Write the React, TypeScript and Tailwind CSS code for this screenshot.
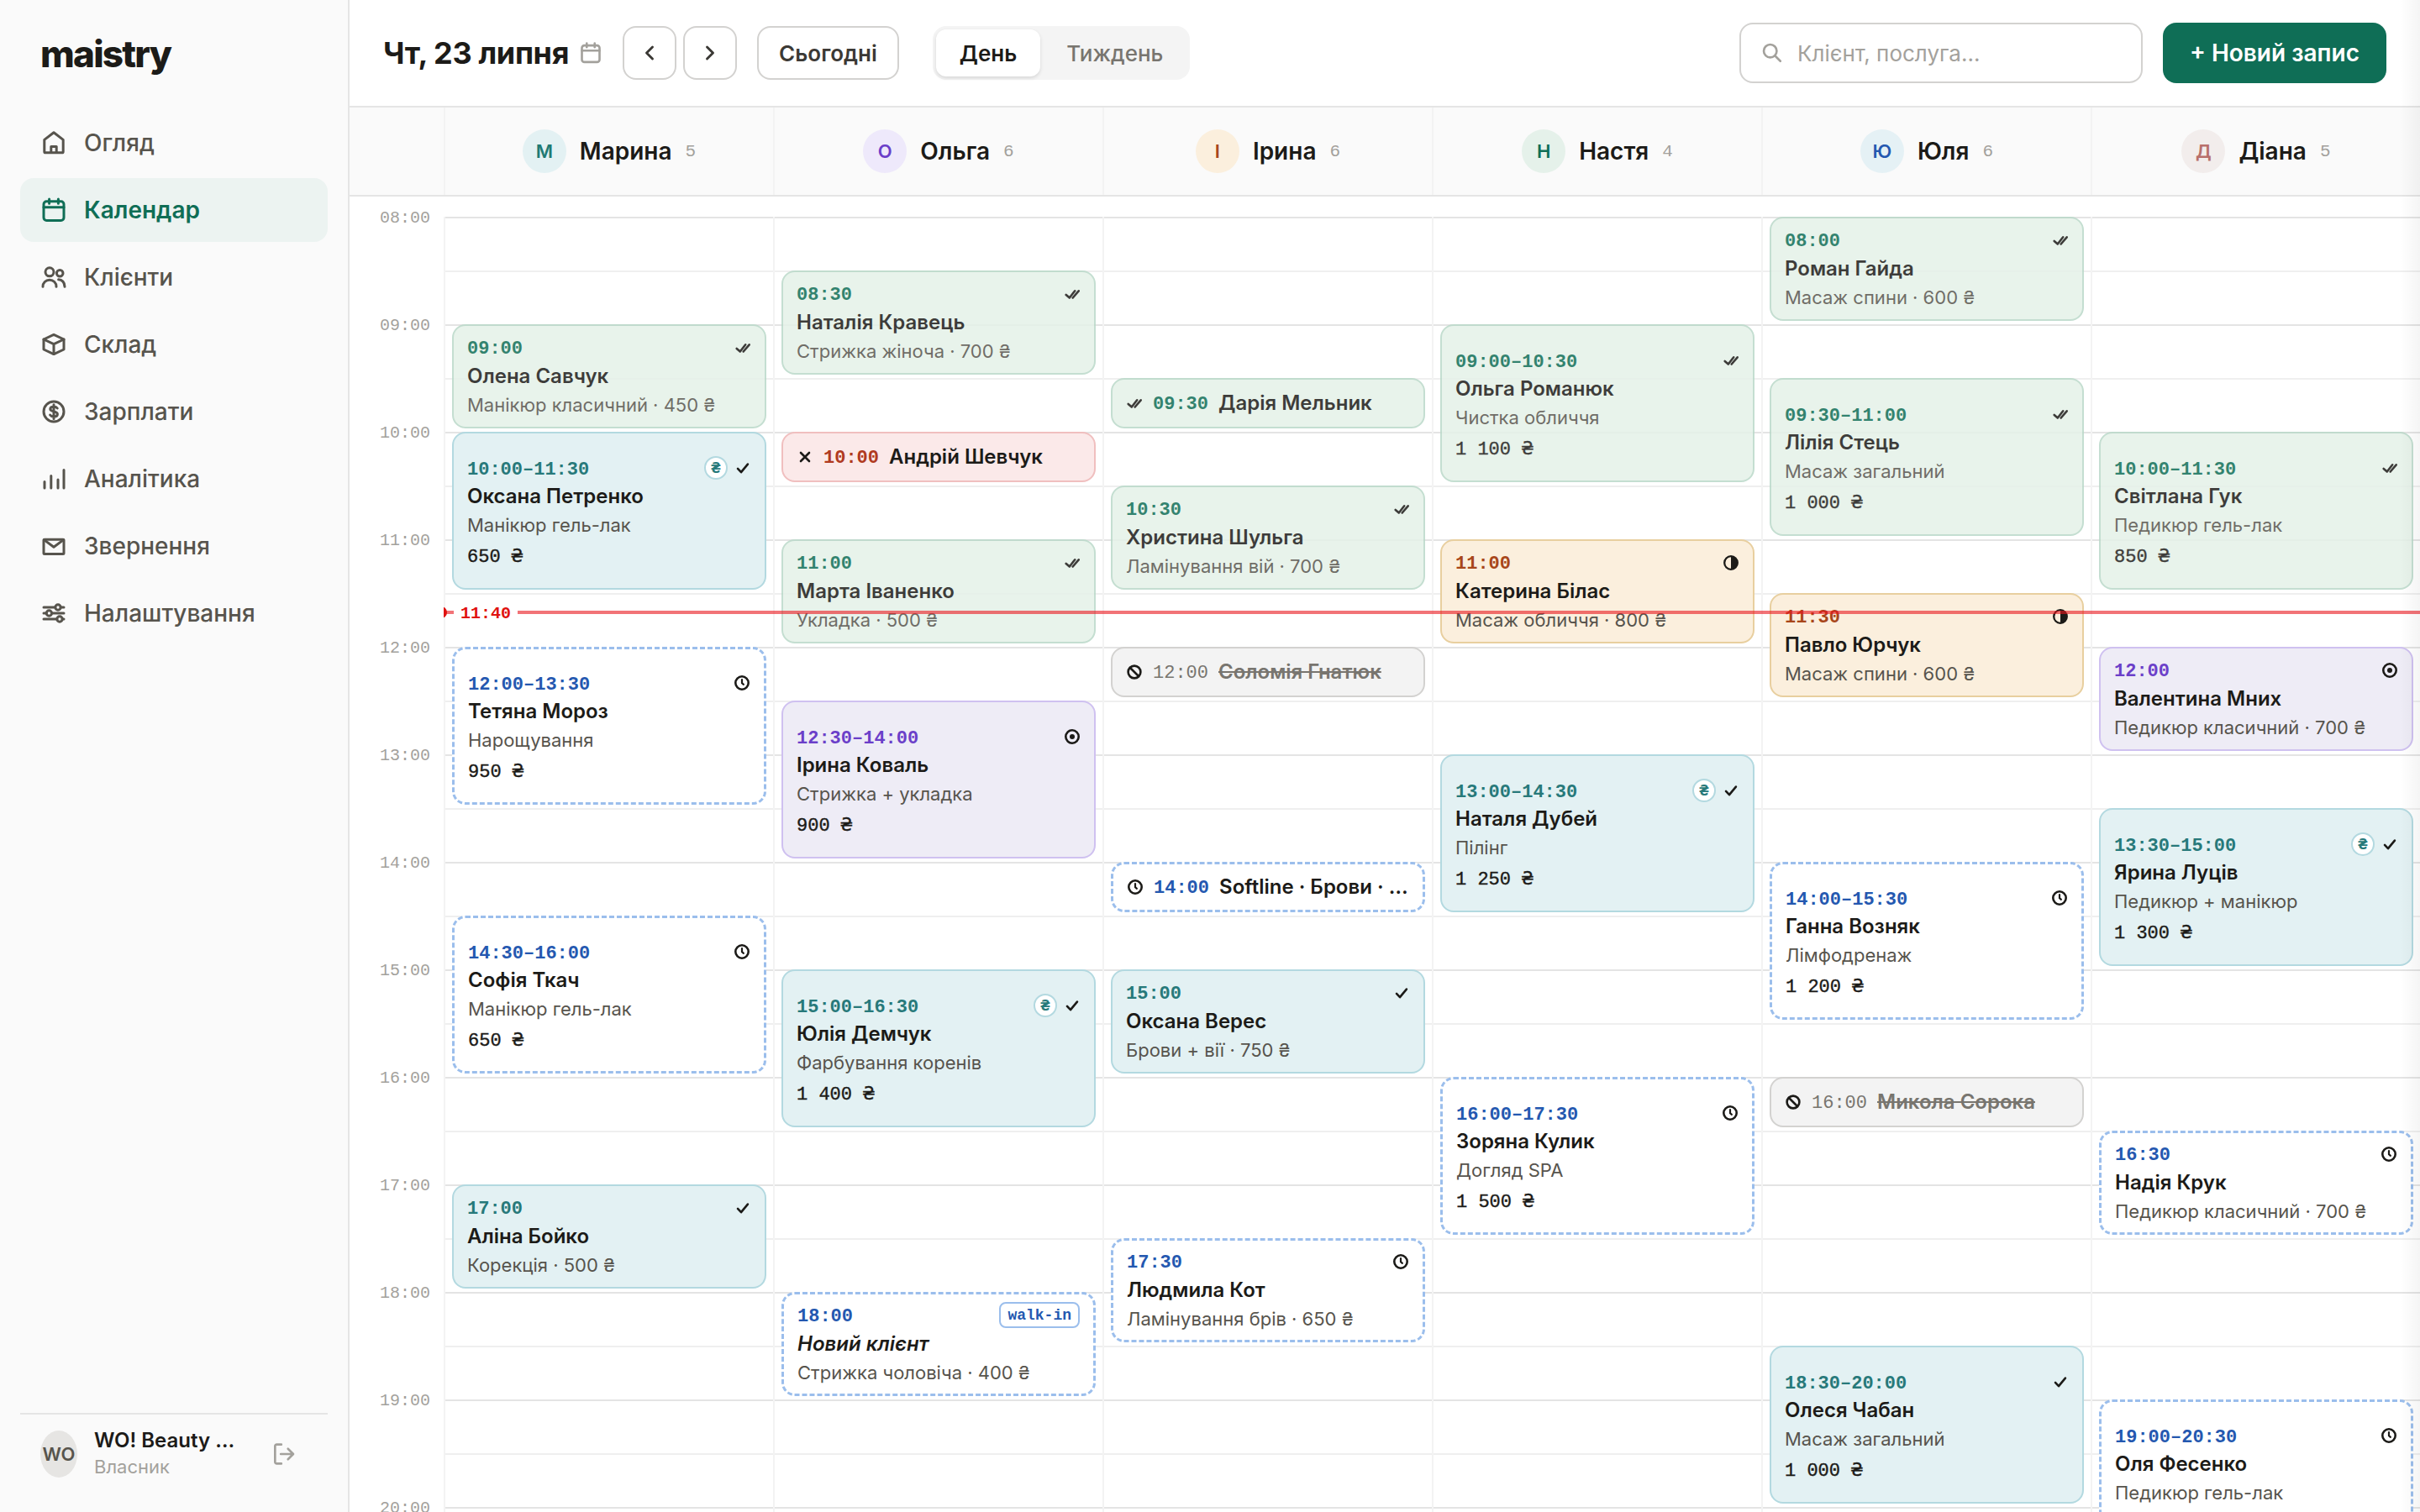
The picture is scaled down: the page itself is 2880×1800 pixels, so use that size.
import React from "react";
import clsx from "clsx";
import { ChevronLeft, ChevronRight } from "lucide-react";

type Status = "done" | "confirmed" | "pending" | "arrived" | "progress" | "cancelled" | "noshow";

type Booking = {
    start: string;
    end: string;
    name: string;
    service?: string;
    price?: string;
    status: Status;
    paid?: boolean;
    walkIn?: boolean;
};

type Master = {
    name: string;
    letter: string;
    count: number;
    avatar: string;
    bookings: Booking[];
};

const DAY_START = 8;
const HOUR_HEIGHT = 128;
const HOURS = Array.from({ length: 13 }, (_, i) => `${String(DAY_START + i).padStart(2, "0")}:00`);

const masters: Master[] = [
    {
        name: "Марина", letter: "М", count: 5, avatar: "bg-[#e3f1f3] text-[#1f7a74]",
        bookings: [
            { start: "09:00", end: "10:00", name: "Олена Савчук", service: "Манікюр класичний", price: "450", status: "done" },
            { start: "10:00", end: "11:30", name: "Оксана Петренко", service: "Манікюр гель-лак", price: "650", status: "confirmed", paid: true },
            { start: "12:00", end: "13:30", name: "Тетяна Мороз", service: "Нарощування", price: "950", status: "pending" },
            { start: "14:30", end: "16:00", name: "Софія Ткач", service: "Манікюр гель-лак", price: "650", status: "pending" },
            { start: "17:00", end: "18:00", name: "Аліна Бойко", service: "Корекція", price: "500", status: "confirmed" },
        ],
    },
    {
        name: "Ольга", letter: "О", count: 6, avatar: "bg-[#eee9fb] text-[#6b3fc9]",
        bookings: [
            { start: "08:30", end: "09:30", name: "Наталія Кравець", service: "Стрижка жіноча", price: "700", status: "done" },
            { start: "10:00", end: "10:30", name: "Андрій Шевчук", status: "noshow" },
            { start: "11:00", end: "12:00", name: "Марта Іваненко", service: "Укладка", price: "500", status: "done" },
            { start: "12:30", end: "14:00", name: "Ірина Коваль", service: "Стрижка + укладка", price: "900", status: "arrived" },
            { start: "15:00", end: "16:30", name: "Юлія Демчук", service: "Фарбування коренів", price: "1 400", status: "confirmed", paid: true },
            { start: "18:00", end: "19:00", name: "Новий клієнт", service: "Стрижка чоловіча", price: "400", status: "pending", walkIn: true },
        ],
    },
    {
        name: "Ірина", letter: "І", count: 6, avatar: "bg-[#fbefdd] text-[#a8461a]",
        bookings: [
            { start: "09:30", end: "10:00", name: "Дарія Мельник", status: "done" },
            { start: "10:30", end: "11:30", name: "Христина Шульга", service: "Ламінування вій", price: "700", status: "done" },
            { start: "12:00", end: "12:30", name: "Соломія Гнатюк", status: "cancelled" },
            { start: "14:00", end: "14:30", name: "Softline · Брови · …", status: "pending" },
            { start: "15:00", end: "16:00", name: "Оксана Верес", service: "Брови + вії", price: "750", status: "confirmed" },
            { start: "17:30", end: "18:30", name: "Людмила Кот", service: "Ламінування брів", price: "650", status: "pending" },
        ],
    },
    {
        name: "Настя", letter: "Н", count: 4, avatar: "bg-[#e5f1ea] text-[#0f6e56]",
        bookings: [
            { start: "09:00", end: "10:30", name: "Ольга Романюк", service: "Чистка обличчя", price: "1 100", status: "done" },
            { start: "11:00", end: "12:00", name: "Катерина Білас", service: "Масаж обличчя", price: "800", status: "progress" },
            { start: "13:00", end: "14:30", name: "Наталя Дубей", service: "Пілінг", price: "1 250", status: "confirmed", paid: true },
            { start: "16:00", end: "17:30", name: "Зоряна Кулик", service: "Догляд SPA", price: "1 500", status: "pending" },
        ],
    },
    {
        name: "Юля", letter: "Ю", count: 6, avatar: "bg-[#e5f1f5] text-[#2458b0]",
        bookings: [
            { start: "08:00", end: "09:00", name: "Роман Гайда", service: "Масаж спини", price: "600", status: "done" },
            { start: "09:30", end: "11:00", name: "Лілія Стець", service: "Масаж загальний", price: "1 000", status: "done" },
            { start: "11:30", end: "12:30", name: "Павло Юрчук", service: "Масаж спини", price: "600", status: "progress" },
            { start: "14:00", end: "15:30", name: "Ганна Возняк", service: "Лімфодренаж", price: "1 200", status: "pending" },
            { start: "16:00", end: "16:30", name: "Микола Сорока", status: "cancelled" },
            { start: "18:30", end: "20:00", name: "Олеся Чабан", service: "Масаж загальний", price: "1 000", status: "confirmed" },
        ],
    },
    {
        name: "Діана", letter: "Д", count: 5, avatar: "bg-[#f2edec] text-[#b8706b]",
        bookings: [
            { start: "10:00", end: "11:30", name: "Світлана Гук", service: "Педикюр гель-лак", price: "850", status: "done" },
            { start: "12:00", end: "13:00", name: "Валентина Мних", service: "Педикюр класичний", price: "700", status: "arrived" },
            { start: "13:30", end: "15:00", name: "Ярина Луців", service: "Педикюр + манікюр", price: "1 300", status: "confirmed", paid: true },
            { start: "16:30", end: "17:30", name: "Надія Крук", service: "Педикюр класичний", price: "700", status: "pending" },
            { start: "19:00", end: "20:30", name: "Оля Фесенко", service: "Педикюр гель-лак", price: "850", status: "pending" },
        ],
    },
];

const cardStyles: Record<Status, string> = {
    done: "border-2 border-[#bad9c9] bg-[#e5f1e8] opacity-85",
    confirmed: "border-2 border-[#b3d9e0] bg-[#e3f1f3]",
    pending: "border-3 border-dashed border-[#9bbeec] bg-white",
    arrived: "border-2 border-[#cfc1f0] bg-[#eeecf6]",
    progress: "border-2 border-[#e8cf9f] bg-[#fbefdd]",
    cancelled: "border-2 border-[#d3d2d0] bg-[#f3f3f3]",
    noshow: "border-2 border-[#f0bfbf] bg-[#fbe9e9]",
};

const timeStyles: Record<Status, string> = {
    done: "text-[#0f6e56]",
    confirmed: "text-[#27797a]",
    pending: "text-[#2458b0]",
    arrived: "text-[#6b3fc9]",
    progress: "text-[#a8461a]",
    cancelled: "text-[#78756f]",
    noshow: "text-[#b03a20]",
};

const navItems = [
    { label: "Огляд", icon: "home" },
    { label: "Календар", icon: "calendar", active: true },
    { label: "Клієнти", icon: "users" },
    { label: "Склад", icon: "box" },
    { label: "Зарплати", icon: "dollar" },
    { label: "Аналітика", icon: "bars" },
    { label: "Звернення", icon: "mail" },
    { label: "Налаштування", icon: "sliders" },
];

const iconShapes: Record<string, React.ReactNode> = {
    home: <><path d="M2.4 6.2 8 1.9l5.6 4.3v7a.7.7 0 0 1-.7.7H3.1a.7.7 0 0 1-.7-.7z" /><path d="M6.4 13.8v-3.6h3.2v3.6" /></>,
    calendar: <><rect x="2" y="2.9" width="12" height="11.3" rx="1.7" /><path d="M2 6.4h12M5.3 1.5v2.6M10.7 1.5v2.6" /></>,
    users: <><circle cx="5.5" cy="4.9" r="2.5" /><circle cx="11.6" cy="5.6" r="1.9" /><path d="M1.5 13.6c0-2.3 1.7-4 4-4s4 1.7 4 4M10.8 9.4c2.1 0 3.7 1.7 3.7 4.2" /></>,
    box: <><path d="M8 2.2 14 5v6l-6 2.8L2 11V5z" /><path d="M2 5l6 2.8L14 5M8 7.8v6" /></>,
    dollar: <><circle cx="8" cy="8" r="6" /><path d="M10.1 6C9.7 5.4 9 5.1 8 5.1c-1.2 0-2.1.5-2.1 1.4 0 1.9 4.3 1 4.3 3 0 .9-.9 1.5-2.2 1.5-1 0-1.8-.4-2.2-1M8 3.9v8.3" /></>,
    bars: <path d="M2.5 13.5V9.8M6.4 13.5V6.2M10.5 13.5v-5M14 13.5V2.7" />,
    mail: <><rect x="2" y="4.1" width="12" height="8.7" rx=".5" /><path d="M2.2 4.3 8 8.6l5.8-4.3" /></>,
    sliders: <><path d="M2 4.5h6.9M12.1 4.5H14M2 8h1.6M6.8 8H14M2 11.5h7.9M13.1 11.5h.9" /><circle cx="10.5" cy="4.5" r="1.6" /><circle cx="5.2" cy="8" r="1.6" /><circle cx="11.5" cy="11.5" r="1.6" /></>,
    search: <><circle cx="6.7" cy="6.7" r="4.4" /><path d="m10 10 3.6 3.6" /></>,
    logout: <><path d="M6.2 1.5H3A1.1 1.1 0 0 0 1.9 2.6v10.8A1.1 1.1 0 0 0 3 14.5h3.2M5.8 8h8.4M10.7 4.4 14.3 8l-3.6 3.6" /></>,
};

function Icon({ name, className }: { name: string; className?: string }) {
    return (
        <svg viewBox="0 0 16 16" fill="none" stroke="currentColor" strokeWidth="1.5" strokeLinecap="round" strokeLinejoin="round" className={clsx("shrink-0", className)}>
            {iconShapes[name]}
        </svg>
    );
}

function StatusIcon({ status }: { status: Status }) {
    return (
        <svg viewBox="0 0 20 20" fill="none" stroke="currentColor" strokeWidth="2.6" strokeLinecap="round" strokeLinejoin="round" className="size-5 shrink-0 text-[#1c1b18]">
            {status === "done" && <path d="M2.7 10.9 6.8 14.5 13.2 6.3M10.7 14.5 17.7 6.3" />}
            {status === "confirmed" && <path d="M4 10.9 8 15.2 15.9 5.6" />}
            {status === "pending" && <><circle cx="10" cy="10" r="7.7" /><path d="M10 6v4.2l1.9 1.6" strokeWidth="2.2" /></>}
            {status === "arrived" && <><circle cx="10" cy="10" r="7.7" /><circle cx="10" cy="10" r="3" fill="currentColor" stroke="none" /></>}
            {status === "progress" && <><circle cx="10" cy="10" r="7.8" strokeWidth="2.3" /><path d="M10 2.2a7.8 7.8 0 0 1 0 15.6z" fill="currentColor" stroke="none" /></>}
            {status === "cancelled" && <><circle cx="10" cy="10" r="7.4" /><path d="m5 5 10 10" /></>}
            {status === "noshow" && <path d="m5 5 10 10M15 5 5 15" />}
        </svg>
    );
}

function Hryvnia() {
    return <span className="font-['DejaVu_Sans_Mono',monospace]">₴</span>;
}

function toHours(time: string) {
    const [h, m] = time.split(":").map(Number);
    return h + m / 60;
}

function BookingCard({ booking }: { booking: Booking }) {
    const { start, end, name, service, price, status, paid, walkIn } = booking;
    const duration = toHours(end) - toHours(start);
    const place = { top: (toHours(start) - DAY_START) * HOUR_HEIGHT, height: duration * HOUR_HEIGHT - 4 };

    if (duration <= 0.5) {
        return (
            <div style={place} className={clsx("absolute inset-x-2 flex items-center gap-3 rounded-2xl px-4", cardStyles[status])}>
                <StatusIcon status={status} />
                <span className={clsx("mt-0.5 font-['Liberation_Mono',monospace] text-[22px]", timeStyles[status], status !== "cancelled" && "font-bold")}>{start}</span>
                <span className={clsx("truncate text-2xl font-semibold", status === "cancelled" ? "text-[#78756f] line-through" : "text-[#1c1b18]")}>{name}</span>
            </div>
        );
    }

    return (
        <div style={place} className={clsx("absolute inset-x-2 flex flex-col justify-center overflow-hidden rounded-2xl px-4", cardStyles[status])}>
            <div className="flex h-[34px] shrink-0 items-center justify-between">
                <span className={clsx("pt-1 font-['Liberation_Mono',monospace] text-[22px] font-bold", timeStyles[status])}>
                    {duration > 1 ? `${start}–${end}` : start}
                </span>
                <div className="flex items-center gap-2">
                    {paid && (
                        <span className="flex size-7 items-center justify-center rounded-full border-2 border-[#b3d9e0] bg-white text-lg font-bold text-[#27797a]">
                            <Hryvnia />
                        </span>
                    )}
                    {walkIn ? (
                        <span className="flex h-[31px] items-center rounded-lg border-2 border-[#9bbeec] px-2 font-['Liberation_Mono',monospace] text-lg font-bold text-[#2458b0]">walk-in</span>
                    ) : (
                        <StatusIcon status={status} />
                    )}
                </div>
            </div>
            <div className={clsx("h-[34px] shrink-0 truncate text-2xl leading-[34px] font-semibold text-[#1c1b18]", walkIn && "italic")}>{name}</div>
            <div className="h-[35px] shrink-0 truncate text-[22px] leading-[35px] text-[#57544d]">{duration > 1 ? service : `${service} · ${price} ₴`}</div>
            {duration > 1 && (
                <div className="h-[33px] shrink-0 font-['Liberation_Mono',monospace] text-[22px] leading-[38px] text-[#1c1b18] [-webkit-text-stroke:0.4px]">
                    {price} <Hryvnia />
                </div>
            )}
        </div>
    );
}

function Sidebar() {
    return (
        <aside className="flex w-[416px] shrink-0 flex-col border-r-2 border-[#e5e5e5] bg-[#fafafa] px-6">
            <div className="flex h-32 items-center px-6 text-[44px] font-extrabold tracking-[-0.04em] text-[#1c1b18]">maistry</div>
            <nav className="mt-1 flex flex-col gap-1">
                {navItems.map((item) => (
                    <a
                        key={item.label}
                        className={clsx(
                            "flex h-19 items-center gap-5 rounded-2xl px-6 text-[28px]",
                            item.active ? "bg-[#ecf3f1] font-semibold text-[#0f6e56]" : "font-medium text-[#57544d]"
                        )}
                    >
                        <Icon name={item.icon} className="size-8" />
                        {item.label}
                    </a>
                ))}
            </nav>
            <div className="mt-auto mb-[22px] flex h-24 items-center border-t-2 border-[#e5e5e5] px-6">
                <div className="flex h-14 w-11 shrink-0 items-center justify-center rounded-[50%] bg-[#e6e5e3] text-[22px] font-semibold text-[#57544d]">WO</div>
                <div className="ml-5 flex w-[212px] flex-col">
                    <span className="text-2xl leading-[30px] font-semibold text-[#1c1b18]">WO! Beauty …</span>
                    <span className="text-[22px] leading-8 text-[#a3a19c]">Власник</span>
                </div>
                <Icon name="logout" className="size-7 text-[#a3a19c]" />
            </div>
        </aside>
    );
}

function Toolbar() {
    return (
        <header className="flex h-32 shrink-0 items-center border-b-2 border-[#e5e5e5] px-10">
            <h1 className="text-4xl font-bold tracking-[-0.01em] text-[#1c1b18]">Чт, 23 липня</h1>
            <Icon name="calendar" className="ml-3 size-7 text-[#a3a19c]" />
            <div className="ml-6 flex gap-2">
                <button className="flex size-16 items-center justify-center rounded-2xl border-2 border-[#d3d2d0] text-[#3b3935]">
                    <ChevronLeft size={28} strokeWidth={2.5} />
                </button>
                <button className="flex size-16 items-center justify-center rounded-2xl border-2 border-[#d3d2d0] text-[#3b3935]">
                    <ChevronRight size={28} strokeWidth={2.5} />
                </button>
            </div>
            <button className="ml-6 h-16 rounded-2xl border-2 border-[#d3d2d0] px-6 text-[26px] font-semibold text-[#3b3935]">Сьогодні</button>
            <div className="ml-10 flex h-16 items-center rounded-2xl bg-[#f4f4f4] p-1 text-[26px]">
                <button className="h-14 rounded-xl bg-white px-7 font-semibold text-[#1c1b18] shadow-[0_2px_4px_rgba(0,0,0,0.12)]">День</button>
                <button className="h-14 pr-7 pl-[31px] font-medium text-[#78756f]">Тиждень</button>
            </div>
            <div className="ml-auto flex h-18 w-[480px] items-center gap-4 rounded-2xl border-2 border-[#d3d2d0] pr-6 pl-[23px] text-[26px] text-[#a3a19c]">
                <Icon name="search" className="size-7" />
                Клієнт, послуга...
            </div>
            <button className="ml-6 h-18 rounded-2xl bg-[#0f6e56] px-8 text-[28px] font-semibold text-white">+ Новий запис</button>
        </header>
    );
}

export default function App() {
    const now = (toHours("11:40") - DAY_START) * HOUR_HEIGHT;

    return (
        <div className="relative flex h-[1800px] w-[2880px] overflow-hidden bg-white font-[Inter,sans-serif]">
            <Sidebar />
            <main className="flex min-w-0 flex-1 flex-col">
                <Toolbar />
                <div className="flex h-[106px] shrink-0 border-b-2 border-[#e5e5e5] bg-[#fafafa]">
                    <div className="w-28 shrink-0" />
                    {masters.map((m) => (
                        <div key={m.name} className="flex flex-1 items-center justify-center gap-4 border-l-2 border-[#f3f3f3]">
                            <div className={clsx("flex size-13 items-center justify-center rounded-full text-[22px] font-semibold", m.avatar)}>{m.letter}</div>
                            <span className="text-[28px] font-semibold text-[#1c1b18]">{m.name}</span>
                            <span className="pt-0.5 font-['Liberation_Mono',monospace] text-[21px] text-[#a3a19c]">{m.count}</span>
                        </div>
                    ))}
                </div>
                <div className="min-h-0 flex-1 overflow-hidden pt-6">
                    <div className="flex">
                        <div className="w-28 shrink-0">
                            {HOURS.map((h) => (
                                <div key={h} className="h-32 pr-4 text-right font-['Liberation_Mono',monospace] text-xl leading-none text-[#a3a19c]">
                                    <div className="-translate-y-2">{h}</div>
                                </div>
                            ))}
                        </div>
                        <div className="relative flex flex-1 overflow-hidden">
                            {masters.map((m) => (
                                <div key={m.name} className="relative flex-1 border-l-2 border-[#f3f3f3]">
                                    {HOURS.map((h) => (
                                        <div key={h}>
                                            <div className="h-16 border-t-2 border-[#e4e4e4]" />
                                            <div className="h-16 border-t-2 border-[#efefef]" />
                                        </div>
                                    ))}
                                    {m.bookings.map((b) => (
                                        <BookingCard key={b.start} booking={b} />
                                    ))}
                                </div>
                            ))}
                            {/* current time */}
                            <div style={{ top: now }} className="absolute inset-x-0 h-1 bg-[#ea151c]/60" />
                            <div style={{ top: now }} className="absolute left-0 flex h-1 items-center">
                                <span className="-ml-2.5 size-3.5 rounded-full bg-[#e0120f]" />
                                <span className="ml-2 bg-white px-2 pt-1 font-['Liberation_Mono',monospace] text-xl leading-6 font-bold text-[#e0120f]">11:40</span>
                            </div>
                        </div>
                    </div>
                </div>
            </main>
            <div className="pointer-events-none absolute inset-y-0 right-0 w-6 bg-linear-to-r from-transparent to-black/4" />
        </div>
    );
}
